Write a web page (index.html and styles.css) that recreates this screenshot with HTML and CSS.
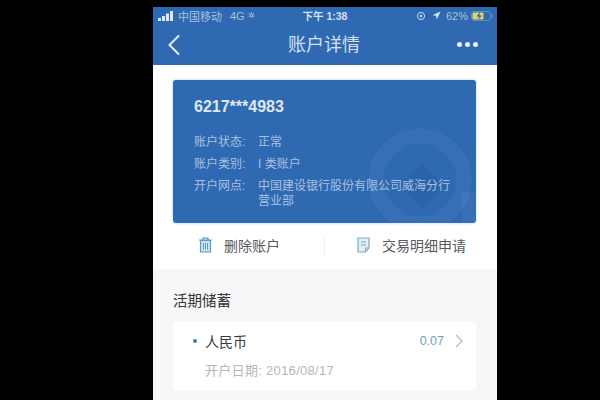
FILE: index.html
```html
<!DOCTYPE html>
<html lang="zh">
<head>
    <meta charset="UTF-8">
    <title>账户详情</title>
    <link rel="stylesheet" href="styles.css">
</head>
<body>
    <div class="phone">
        <div class="header">
            <div class="status">
                <div class="status-left">
                    <svg class="signal" width="16" height="10" viewBox="0 0 16 10"><rect x="0" y="7" width="3" height="3" fill="#dfe8f4"/><rect x="4" y="5" width="3" height="5" fill="#dfe8f4"/><rect x="8" y="2.5" width="3" height="7.5" fill="#dfe8f4"/><rect x="12" y="0" width="3" height="10" fill="#dfe8f4"/></svg>
                    <span>中国移动</span>
                    <span class="net">4G</span>
                    <span class="load">✲</span>
                </div>
                <div class="status-time">下午 1:38</div>
                <div class="status-right">
                    <svg width="10" height="10" viewBox="0 0 10 10"><circle cx="5" cy="5" r="3.6" fill="none" stroke="#c9d8ec" stroke-width="1"/><circle cx="5" cy="5" r="1.3" fill="#c9d8ec"/></svg>
                    <svg class="arrow" width="9" height="9" viewBox="0 0 9 9"><path d="M8.5.5 L.5 4.2 L4.2 4.8 L4.8 8.5 Z" fill="#dfe8f4"/></svg>
                    <span>62%</span>
                    <svg class="battery" width="22" height="10" viewBox="0 0 22 10"><rect x=".5" y=".5" width="19" height="9" rx="2.5" fill="none" stroke="#5f8cc4"/><rect x="1.5" y="1.5" width="11" height="7" rx="1" fill="#e3d26a"/><path d="M9 1 L5.5 5.5 H8 L7 9 L11 4.5 H8.5 Z" fill="#2f69b2"/><rect x="20.3" y="3.2" width="1.2" height="3.6" fill="#5f8cc4"/></svg>
                </div>
            </div>
            <div class="nav">
                <svg class="back" width="14" height="22" viewBox="0 0 14 22"><path d="M12 1.5 L2.5 11 L12 20.5" fill="none" stroke="#e8eef7" stroke-width="2"/></svg>
                <div class="nav-title">账户详情</div>
                <div class="more"><i></i><i></i><i></i></div>
            </div>
        </div>

        <div class="top-panel">
            <div class="card">
                <svg class="card-logo" width="120" height="100" viewBox="0 0 120 100">
                    <circle cx="64" cy="57" r="44" fill="none" stroke="#ffffff" stroke-opacity="0.045" stroke-width="15"/>
                    <path d="M66 40 L89 63 L66 86 L43 63 Z" fill="#000000" fill-opacity="0.05"/>
                    <rect x="106" y="69" width="14" height="31" fill="#ffffff" fill-opacity="0.05"/>
                </svg>
                <div class="card-no">6217***4983</div>
                <div class="info-row"><span class="info-label">账户状态:</span><span>正常</span></div>
                <div class="info-row"><span class="info-label">账户类别:</span><span>I 类账户</span></div>
                <div class="info-row"><span class="info-label">开户网点:</span><span class="info-val">中国建设银行股份有限公司威海分行营业部</span></div>
            </div>
            <div class="actions">
                <div class="action action-del">
                    <svg width="15" height="16" viewBox="0 0 15 16"><path d="M1 3 H14 M5 3 V1.2 H10 V3" fill="none" stroke="#5d9cc4" stroke-width="1.2"/><path d="M2.5 3.5 H12.5 V15 H2.5 Z" fill="#cfe2ee" stroke="#5d9cc4" stroke-width="1.2"/><path d="M5.5 6 V12.5 M7.5 6 V12.5 M9.5 6 V12.5" stroke="#5d9cc4" stroke-width="1"/></svg>
                    <span>删除账户</span>
                </div>
                <div class="divider"></div>
                <div class="action action-apply">
                    <svg width="13" height="16" viewBox="0 0 13 16"><path d="M1 1 H12 V11 L8.5 15 H1 Z" fill="#e3edf3" stroke="#7fabc6" stroke-width="1.2"/><path d="M4 5 H9 M4 8 H9 M8.5 15 V11 H12" fill="none" stroke="#7fabc6" stroke-width="1"/></svg>
                    <span>交易明细申请</span>
                </div>
            </div>
        </div>

        <div class="savings">
            <div class="savings-title">活期储蓄</div>
            <div class="account-item">
                <div class="item-top">
                    <div class="item-name"><i class="dot"></i>人民币</div>
                    <div class="item-amount">0.07
                        <svg width="8" height="14" viewBox="0 0 8 14"><path d="M1 1 L7 7 L1 13" fill="none" stroke="#b5b9bd" stroke-width="1.2"/></svg>
                    </div>
                </div>
                <div class="item-date">开户日期: 2016/08/17</div>
            </div>
        </div>
    </div>
</body>
</html>
```

FILE: styles.css
```css
html, body { margin: 0; height: 100%; background: #000; overflow: hidden; }
body { font-family: "Liberation Sans", "Noto Sans CJK SC", sans-serif; }

.phone { width: 344px; height: 393px; margin: 7px 0 0 153px; background: #f7f7f7; }

.header { background: #2f69b2; height: 58px; color: #dfe8f4; }
.status { display: flex; justify-content: space-between; align-items: center; height: 17px; padding: 0 4px 0 5px; font-size: 11px; position: relative; color: #a9c1df; }
.status-left, .status-right { display: flex; align-items: center; gap: 3px; }
.signal { margin-right: 1px; }
.net { margin-left: 5px; }
.load { font-size: 8px; }
.status-time { color: #d5e0ee; font-weight: bold; font-size: 10.5px; position: absolute; left: 0; right: 0; text-align: center; }
.arrow { margin: 0 2px 0 3px; }

.nav { display: flex; align-items: center; justify-content: space-between; height: 41px; padding: 0 19px 0 14px; box-sizing: border-box; position: relative; }
.nav-title { position: absolute; left: 0; right: 2px; top: 6px; text-align: center; font-size: 18px; color: #d5e0ee; }
.more { display: flex; gap: 3px; }
.more i { width: 5px; height: 5px; border-radius: 50%; background: #eef2f8; }

.top-panel { background: #fff; padding: 15px 21px 0 20px; height: 204px; box-sizing: border-box; }
.card { background: #2f69b2; height: 143px; border-radius: 3px; padding: 18px 21px 0; box-sizing: border-box; position: relative; overflow: hidden; color: #a9c1df; font-size: 12px; box-shadow: 0 0 3px #b9cfe4; }
.card-logo { position: absolute; right: 0; bottom: 0; }
.card-no { font-size: 16px; font-weight: bold; color: #dfe7f2; margin-bottom: 19px; line-height: 18px; }
.info-row { display: flex; line-height: 14px; margin-bottom: 8px; position: relative; }
.info-label { width: 64px; flex: none; }
.info-val { line-height: 15px; }

.actions { display: flex; align-items: center; height: 44px; color: #55595e; font-size: 14px; }
.action { display: flex; align-items: center; gap: 11px; }
.action-del { width: 151px; padding-left: 25px; box-sizing: border-box; }
.action-apply { padding-left: 32px; gap: 12px; }
.divider { width: 1px; height: 20px; background: #f0f0f0; }

.savings { padding: 0 21px 0 20px; }
.savings-title { font-size: 14.5px; color: #33363a; height: 52px; line-height: 64px; }
.account-item { background: #fff; height: 70px; padding: 0 13px 0 20px; border-radius: 4px; }
.item-top { display: flex; justify-content: space-between; align-items: center; height: 40px; }
.item-name { display: flex; align-items: center; font-size: 14px; color: #3a3d40; }
.dot { width: 4px; height: 4px; border-radius: 50%; background: #3e78ae; margin-right: 8px; }
.item-amount { display: flex; align-items: center; gap: 11px; font-size: 12.5px; color: #6f9ec4; }
.item-date { font-size: 13px; letter-spacing: 0.3px; color: #b4b6b8; padding-left: 12px; line-height: 20px; }
```
